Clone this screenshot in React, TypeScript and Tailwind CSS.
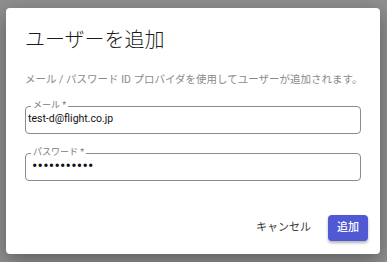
import React from "react";

const FieldBox = ({
  label,
  children,
}: {
  label: string;
  children: React.ReactNode;
}) => (
  <div className="relative h-[28px] rounded-[4px] border border-[#8c8c8c] pl-[2px]">
    <span className="absolute -top-[7px] left-[5px] bg-white px-[2px] text-[9px] leading-[11px] text-[#7a7a7a]">
      {label}
    </span>
    {children}
  </div>
);

export default function App() {
  return (
    <div className="h-[262px] w-[387px] bg-[#8f8f8f] pl-[6px] pt-[8px] font-['Roboto','Noto_Sans_CJK_JP',sans-serif]">
      <div className="flex h-[246px] w-[374px] flex-col rounded-[4px] bg-white shadow-[0_6px_20px_rgba(0,0,0,0.35)]">
        <div className="px-[19px] pt-[20px]">
          <h2 className="text-[20px] leading-[24px] font-light text-[#1c1c1c]">
            ユーザーを追加
          </h2>
          <p className="mt-[20px] whitespace-nowrap text-[10.5px] leading-[16px] text-[#8a8a8a]">
            メール / パスワード ID プロバイダを使用してユーザーが追加されます。
          </p>

          <div className="mt-[18px]">
            <FieldBox label="メール *">
              <div className="pt-[5px] text-[10.5px] leading-[13px] text-[#111]">
                test-d@flight.co.jp
              </div>
            </FieldBox>
          </div>

          <div className="mt-[19px]">
            <FieldBox label="パスワード *">
              <div className="pl-[4px] pt-[5px] text-[16px] leading-[14px] tracking-[0.2px] text-[#111]">
                •••••••••••
              </div>
            </FieldBox>
          </div>
        </div>

        {/* actions */}
        <div className="mt-auto flex items-center justify-end gap-[9px] pb-[13px] pr-[12px]">
          <button className="h-[26px] rounded-[4px] px-[8px] text-[11px] text-[#3a3a3a]">
            キャンセル
          </button>
          <button className="h-[26px] w-[40px] rounded-[4px] bg-[#5058d4] text-[11px] font-medium text-white shadow-[0_2px_3px_rgba(0,0,0,0.3)]">
            追加
          </button>
        </div>
      </div>
    </div>
  );
}
